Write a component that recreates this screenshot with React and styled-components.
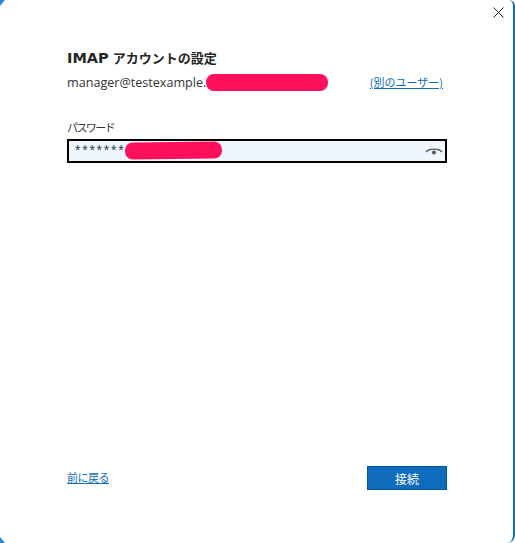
import React from "react";
import styled, { createGlobalStyle } from "styled-components";

const Global = createGlobalStyle`
  html, body { margin: 0; padding: 0; background: #fff; }
  body { font-family: "Noto Sans CJK JP", "Liberation Sans", sans-serif; }
`;

const Dialog = styled.div`
  box-sizing: border-box;
  position: relative;
  width: 515px;
  height: 543px;
  padding: 47px 68px 0 67px;
  display: flex;
  flex-direction: column;
  background: #fff;
  border-right: 2px solid #1a6fb5;
  border-radius: 0 6px 8px 0;
  overflow: hidden;

  /* bits of the window frame left in the corners of the capture */
  &::before,
  &::after {
    content: "";
    position: absolute;
    left: 0;
    width: 5px;
    height: 6px;
    background: #2a86d8;
  }
  &::before {
    top: 0;
    clip-path: polygon(0 0, 100% 0, 0 100%);
  }
  &::after {
    bottom: 0;
    clip-path: polygon(0 0, 100% 100%, 0 100%);
  }
`;

const CloseButton = styled.button`
  position: absolute;
  top: 7px;
  right: 9px;
  width: 11px;
  height: 11px;
  padding: 0;
  border: 0;
  background: none;
  display: flex;
`;

const Title = styled.h1`
  margin: 0;
  height: 22px;
  font-size: 13px;
  line-height: 22px;
  font-weight: 700;
  color: #262626;
  font-family: "Noto Sans CJK JP", sans-serif;
`;

const Latin = styled.span`
  font-family: "DejaVu Sans", sans-serif;
  font-size: 14.5px;
  margin-right: 4px;
`;

const AccountRow = styled.div`
  margin-top: 3px;
  height: 20px;
  display: flex;
  align-items: center;
  font-size: 12.6px;
  color: #333;
  font-family: "Open Sans", "Noto Sans CJK JP", sans-serif;
`;

const Redaction = styled.span`
  display: block;
  width: ${(p) => p.$w}px;
  height: ${(p) => p.$h}px;
  margin-bottom: ${(p) => p.$lift || 0}px;
  border-radius: 8px;
  background: #ff0f5c;
  flex: none;
  transform: rotate(${(p) => p.$tilt || 0}deg);
`;

const Link = styled.a`
  color: #0f6cbd;
  font-size: 11px;
  text-decoration: underline;
  font-family: "Noto Sans CJK JP", sans-serif;
  cursor: pointer;
`;

const AccountLink = styled(Link)`
  margin-left: auto;
  margin-right: 2px;
`;

const FieldLabel = styled.label`
  display: block;
  margin-top: 26px;
  height: 18px;
  line-height: 18px;
  font-size: 11px;
  letter-spacing: -1.6px;
  color: #333;
`;

const PasswordBox = styled.div`
  box-sizing: border-box;
  margin-top: 3px;
  width: 380px;
  height: 24px;
  padding: 0 2px 0 6px;
  display: flex;
  align-items: center;
  background: #eff6fd;
  border: 2px solid #000;
`;

const Masked = styled.span`
  font-family: "Liberation Sans", sans-serif;
  font-size: 14px;
  letter-spacing: 1.75px;
  color: #2b3a44;
  line-height: 18px;
  margin-bottom: 3px;
`;

const EyeIcon = styled.svg`
  margin-left: auto;
  width: 18px;
  height: 10px;
`;

const Footer = styled.div`
  margin-top: auto;
  margin-bottom: 53px;
  display: flex;
  align-items: flex-start;
  justify-content: space-between;
`;

const BackLink = styled(Link)`
  font-size: 11px;
  letter-spacing: -0.5px;
  line-height: 22px;
`;

const PrimaryButton = styled.button`
  box-sizing: border-box;
  width: 80px;
  height: 24px;
  margin-right: -2px;
  padding: 0;
  font-family: "Noto Sans CJK JP", sans-serif;
  font-size: 12px;
  color: #fff;
  background: #0f6cbd;
  border: 1px solid #005a9e;
`;

export default function App() {
  return (
    <Dialog>
      <Global />
      <CloseButton aria-label="閉じる">
        <svg width="11" height="11" viewBox="0 0 11 11">
          <path d="M0.5 0.5L10.5 10.5M10.5 0.5L0.5 10.5" stroke="#222" strokeWidth="1" fill="none" />
        </svg>
      </CloseButton>
      <Title>
        <Latin>IMAP</Latin>アカウントの設定
      </Title>
      <AccountRow>
        manager@testexample.
        <Redaction $w={122} $h={17} />
        <AccountLink>(別のユーザー)</AccountLink>
      </AccountRow>
      <FieldLabel>パスワード</FieldLabel>
      <PasswordBox>
        <Masked>*******</Masked>
        <Redaction $w={97} $h={17} $tilt={-0.6} $lift={2} />
        <EyeIcon viewBox="0 0 18 10">
          <path d="M1 6C4 2.2 14 2.2 17 6" stroke="#555" strokeWidth="1.4" fill="none" />
          <circle cx="9" cy="6.5" r="2" fill="#555" />
        </EyeIcon>
      </PasswordBox>
      <Footer>
        <BackLink>前に戻る</BackLink>
        <PrimaryButton>接続</PrimaryButton>
      </Footer>
    </Dialog>
  );
}
